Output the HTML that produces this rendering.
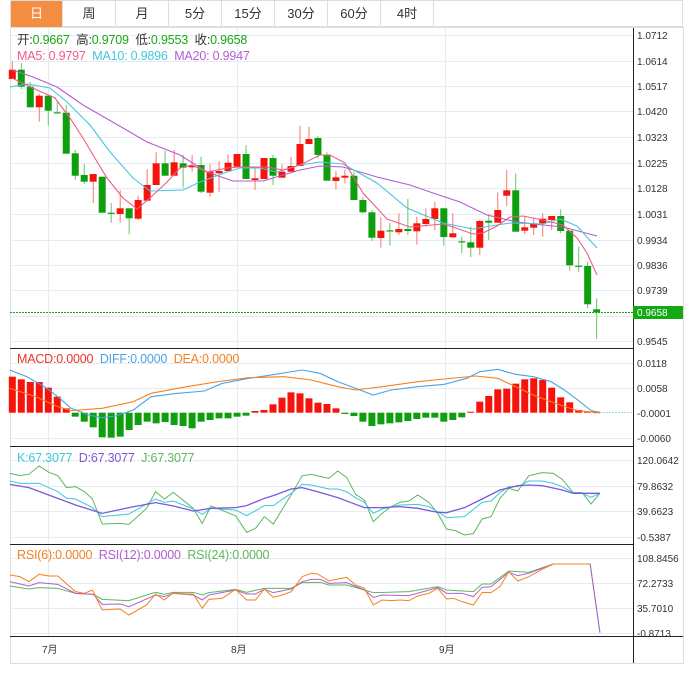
<!DOCTYPE html>
<html><head><meta charset="utf-8">
<style>
body{margin:0;background:#fff;width:693px;height:673px;overflow:hidden;font-family:"Liberation Sans","Noto Sans CJK SC",sans-serif;}
.tabs{position:absolute;left:10px;top:0;height:27px;width:673px;border:1px solid #ddd;border-bottom:1px solid #ddd;box-sizing:border-box;display:flex;}
.tab{width:53px;height:26px;line-height:26px;text-align:center;font-size:13px;color:#333;border-right:1px solid #ddd;box-sizing:border-box;}
.tab.on{background:#f48c42;color:#fff;width:52px;}
svg{position:absolute;left:0;top:0}
.lg{position:absolute;font-size:12.5px;line-height:16px;white-space:nowrap;letter-spacing:-0.2px}
</style></head><body>
<div class="tabs"><div class="tab on">日</div><div class="tab">周</div><div class="tab">月</div><div class="tab">5分</div><div class="tab">15分</div><div class="tab">30分</div><div class="tab">60分</div><div class="tab">4时</div></div>
<svg id="s" width="693" height="673" font-family="Liberation Sans, sans-serif">
<rect x="10.5" y="27.5" width="673" height="636" fill="none" stroke="#ddd"/>
<g stroke="#e6edf2" stroke-width="1">
<line x1="10" x2="633" y1="35.5" y2="35.5"/><line x1="10" x2="633" y1="61.5" y2="61.5"/><line x1="10" x2="633" y1="86.5" y2="86.5"/><line x1="10" x2="633" y1="111.5" y2="111.5"/><line x1="10" x2="633" y1="137.5" y2="137.5"/><line x1="10" x2="633" y1="163.5" y2="163.5"/><line x1="10" x2="633" y1="188.5" y2="188.5"/><line x1="10" x2="633" y1="214.5" y2="214.5"/><line x1="10" x2="633" y1="240.5" y2="240.5"/><line x1="10" x2="633" y1="265.5" y2="265.5"/><line x1="10" x2="633" y1="290.5" y2="290.5"/><line x1="10" x2="633" y1="316.5" y2="316.5"/><line x1="10" x2="633" y1="341.5" y2="341.5"/>
<line x1="10" x2="633" y1="363.5" y2="363.5"/><line x1="10" x2="633" y1="388.5" y2="388.5"/><line x1="10" x2="633" y1="438.5" y2="438.5"/>
<line x1="10" x2="633" y1="460.5" y2="460.5"/><line x1="10" x2="633" y1="486.5" y2="486.5"/><line x1="10" x2="633" y1="511.5" y2="511.5"/><line x1="10" x2="633" y1="537.5" y2="537.5"/>
<line x1="10" x2="633" y1="558.5" y2="558.5"/><line x1="10" x2="633" y1="583.5" y2="583.5"/><line x1="10" x2="633" y1="608.5" y2="608.5"/><line x1="10" x2="633" y1="633.5" y2="633.5"/>
<line x1="48.5" x2="48.5" y1="28" y2="636"/><line x1="237.5" x2="237.5" y1="28" y2="636"/><line x1="445.5" x2="445.5" y1="28" y2="636"/>
</g>
<g stroke="#222" stroke-width="1">
<line x1="633.5" x2="633.5" y1="28" y2="663"/>
<line x1="10" x2="633" y1="348.5" y2="348.5"/><line x1="10" x2="633" y1="446.5" y2="446.5"/><line x1="10" x2="633" y1="544.5" y2="544.5"/><line x1="10" x2="683" y1="636.5" y2="636.5"/>
</g>
<g id="candles"></g>
<g fill="none" stroke-width="1.1">
<polyline stroke="#b25ed0" points="12,70 33,77 57,87 83,105 123,128 147,142 180,155 207,172 233,181 263,181 300,170 320,166 343,167 377,177 410,185 433,193 460,202 487,215 517,222 543,225 563,227 597,236"/>
<polyline stroke="#44c6de" points="10,87 27,84 50,88 67,102 90,125 110,152 133,178 150,191 183,190 200,182 227,172 240,168 260,168 277,172 300,165 320,162 343,164 377,183 407,208 443,223 473,229 497,225 510,223 543,224 560,219 577,226 597,248"/>
<polyline stroke="#ef5b86" points="12,78 20,82 37,90 55,98 70,118 83,138 93,155 107,178 123,198 137,209 150,198 167,182 180,168 192,165 207,172 227,168 240,167 267,167 283,170 300,165 320,155 330,155 345,163 363,193 387,219 410,227 443,224 453,227 473,234 483,233 497,226 510,217 523,216 543,220 563,225 577,238 587,253 597,275"/>
</g>
<line x1="10" x2="633" y1="312.5" y2="312.5" stroke="#14a814" stroke-dasharray="2,1"/>
<rect x="633" y="306" width="50" height="13" fill="#14a814"/>
<text x="637" y="316" font-size="10" fill="#fff">0.9658</text>
<g id="macd"></g>
<line x1="600" x2="633" y1="412.5" y2="412.5" stroke="#9ed8ee" stroke-dasharray="2,1"/>
<g transform="translate(0,340) scale(0.4444,0.3333)" fill="none" stroke-width="1.1">
<polyline vector-effect="non-scaling-stroke" stroke="#4aa3e8" points="22,90 60,110 100,140 130,170 160,205 200,225 230,233 260,228 300,210 340,170 400,160 460,153 500,130 560,115 600,107 680,90 720,100 760,125 800,145 840,165 880,150 940,140 1000,133 1050,115 1080,95 1120,88 1160,103 1200,110 1240,125 1270,150 1300,180 1330,212 1350,217"/>
<polyline vector-effect="non-scaling-stroke" stroke="#f5811f" points="22,145 80,170 130,200 160,212 230,205 300,185 340,160 420,140 500,123 560,113 640,110 700,120 760,140 800,150 860,140 940,125 1000,117 1070,108 1120,115 1160,140 1200,165 1260,195 1300,212 1350,218"/>
</g>
<g transform="translate(0,445) scale(0.4444,0.3333)" fill="none">
<polyline vector-effect="non-scaling-stroke" stroke="#5cb85c" points="22,85 45,92 65,88 88,63 110,82 130,92 150,128 170,125 190,140 208,162 230,237 270,235 290,238 330,190 350,140 370,162 390,142 435,190 455,235 475,183 530,212 555,262 575,250 595,215 615,237 655,150 680,92 700,88 740,100 760,78 780,97 800,148 820,165 840,230 860,205 880,185 900,172 920,168 940,150 965,172 985,205 1005,252 1025,257 1045,270 1065,266 1085,222 1105,215 1125,160 1145,130 1165,138 1190,92 1220,83 1245,85 1265,103 1290,143 1310,143 1330,177 1350,145"/>
<polyline vector-effect="non-scaling-stroke" stroke="#3cc8dc" points="22,108 45,115 88,115 130,140 150,160 170,162 208,188 230,215 290,207 350,162 370,172 390,168 435,192 455,208 475,190 530,195 555,212 595,182 615,182 655,145 680,118 700,120 740,132 760,132 780,140 800,158 820,172 840,205 860,192 900,180 940,178 965,185 985,200 1005,218 1045,215 1085,172 1105,168 1125,143 1145,125 1165,125 1190,108 1220,108 1245,115 1265,125 1290,143 1310,145 1330,157 1350,145"/>
<polyline vector-effect="non-scaling-stroke" stroke="#7e57d8" stroke-width="1.3" points="22,118 65,128 130,160 170,180 230,205 290,188 350,173 390,183 435,198 475,190 530,188 555,182 595,160 615,152 655,132 680,128 720,142 760,158 800,178 820,188 860,188 900,185 940,190 985,202 1005,203 1045,188 1085,162 1125,135 1165,122 1190,120 1220,122 1265,135 1290,145 1350,145"/>
</g>
<g transform="translate(0,540) scale(0.4444,0.3333)" fill="none">
<polyline vector-effect="non-scaling-stroke" stroke="#5cb85c" points="22,138 65,147 88,143 130,145 170,160 210,163 230,178 290,182 350,157 370,163 390,157 435,157 455,165 470,158 530,148 555,157 595,145 655,145 680,128 720,127 740,135 780,135 820,150 840,158 920,155 985,140 1005,150 1065,155 1085,132 1105,132 1145,93 1190,97 1245,72 1328,72 1350,278"/>
<polyline vector-effect="non-scaling-stroke" stroke="#b25ed0" points="22,125 65,138 88,128 130,133 170,160 210,163 230,193 270,192 290,200 350,165 370,170 390,160 435,165 455,180 470,165 530,150 555,162 575,162 595,148 615,158 655,147 680,125 700,118 720,118 740,130 780,128 820,150 840,172 860,165 920,167 985,143 1005,160 1040,160 1065,170 1085,142 1105,140 1145,97 1165,107 1190,100 1245,72 1328,72 1350,278"/>
<polyline vector-effect="non-scaling-stroke" stroke="#f5811f" points="22,105 45,110 65,125 88,103 110,108 130,108 170,155 190,160 208,150 230,210 250,208 270,207 290,225 330,195 350,162 370,180 390,158 420,162 435,162 455,205 470,178 500,175 530,148 555,180 575,180 595,147 615,172 635,165 655,155 680,110 700,100 715,102 740,123 760,117 780,112 800,135 820,145 840,195 860,180 880,182 900,180 920,182 940,168 965,160 985,145 1005,177 1020,175 1040,185 1065,195 1085,157 1105,158 1125,140 1145,95 1165,123 1190,110 1220,88 1245,72 1328,72"/>
</g>
<g font-size="10" fill="#333">
<text x="637" y="39">1.0712</text><text x="637" y="65">1.0614</text><text x="637" y="90">1.0517</text><text x="637" y="115">1.0420</text><text x="637" y="141">1.0323</text><text x="637" y="167">1.0225</text><text x="637" y="192">1.0128</text><text x="637" y="218">1.0031</text><text x="637" y="244">0.9934</text><text x="637" y="269">0.9836</text><text x="637" y="294">0.9739</text><text x="637" y="345">0.9545</text>
<text x="637" y="367">0.0118</text><text x="637" y="392">0.0058</text><text x="637" y="417">-0.0001</text><text x="637" y="442">-0.0060</text>
<text x="637" y="464">120.0642</text><text x="637" y="490">79.8632</text><text x="637" y="515">39.6623</text><text x="637" y="541">-0.5387</text>
<text x="637" y="562">108.8456</text><text x="637" y="587">72.2733</text><text x="637" y="612">35.7010</text><text x="637" y="637">-0.8713</text>
<text x="42" y="653" font-family="Liberation Sans, Noto Sans CJK SC, sans-serif">7月</text><text x="231" y="653" font-family="Liberation Sans, Noto Sans CJK SC, sans-serif">8月</text><text x="439" y="653" font-family="Liberation Sans, Noto Sans CJK SC, sans-serif">9月</text>
</g>
</svg>
<div class="lg" style="left:17px;top:32px;color:#333">开:<span style="color:#14a814">0.9667</span>&nbsp; 高:<span style="color:#14a814">0.9709</span>&nbsp; 低:<span style="color:#14a814">0.9553</span>&nbsp; 收:<span style="color:#14a814">0.9658</span></div>
<div class="lg" style="left:17px;top:48px"><span style="color:#ef5b86">MA5: 0.9797</span>&nbsp; <span style="color:#44c6de">MA10: 0.9896</span>&nbsp; <span style="color:#b25ed0">MA20: 0.9947</span></div>
<div class="lg" style="left:17px;top:351px"><span style="color:#ee3322">MACD:0.0000</span>&nbsp; <span style="color:#4aa3e8">DIFF:0.0000</span>&nbsp; <span style="color:#f5811f">DEA:0.0000</span></div>
<div class="lg" style="left:17px;top:450px"><span style="color:#3cc8dc">K:67.3077</span>&nbsp; <span style="color:#7e57d8">D:67.3077</span>&nbsp; <span style="color:#5cb85c">J:67.3077</span></div>
<div class="lg" style="left:17px;top:547px"><span style="color:#f5811f">RSI(6):0.0000</span>&nbsp; <span style="color:#b25ed0">RSI(12):0.0000</span>&nbsp; <span style="color:#5cb85c">RSI(24):0.0000</span></div>
<script>
var C=[['r',69.7,79,61,79],['g',69.7,86.7,63,89.3],['g',86.7,107.3,82,107.3],['r',95.7,107.3,94,121.7],['g',95.7,110.7,95.7,125.7],['g',112.3,112.3,101.7,112.3],['g',112.7,153.7,105,153.7],['g',153.3,175.7,150,180],['g',175,181.7,164,184],['r',174,181.7,174,203.3],['g',176.7,212.7,176.7,212.7],['g',212.7,212.7,203,222.7],['r',208.3,214,190,222.7],['g',208.3,218.3,208.3,234.3],['r',200,218.7,195.7,220],['r',185,200.7,169.3,200.7],['r',163.3,185,152.3,185],['g',163.3,175.7,150.7,175.7],['r',162.3,175.7,150,175.7],['g',163.3,167.7,155,187.7],['r',165.7,167.3,155,171.7],['g',165,191.7,156.7,193.3],['r',171.7,192.7,164.3,196.7],['r',171,173.3,161,191.7],['r',162.7,171,154.3,171],['r',154,166.7,154,166.7],['g',154,179,145,179],['r',178.3,180,168.3,190],['r',158,179,158,179],['g',158,175.7,155,185],['r',171.7,177.7,164.3,177.7],['r',166,171.7,156.7,171.7],['r',144,166,125.7,166],['r',139,144,126.7,144],['g',138,155,136,158.3],['g',155,180.7,152.3,180.7],['r',177.3,181,171,189.3],['r',175.7,177.7,169.3,183.3],['g',175.7,200,171.7,200],['g',200,212.3,197.3,213.3],['g',212.3,237.7,210,241],['r',230.7,238,217.3,247.7],['g',230.3,231.3,222.7,245.3],['r',229,232.3,213.3,235],['g',229,231,199,235],['r',223.3,231.3,216.7,244.7],['r',219,224,208.3,226.7],['r',208.3,219,201.7,230],['g',208.3,237,208.3,245.7],['r',233.3,237.3,213.3,237.3],['g',241.3,241.3,236.7,253.3],['g',242.3,247.7,226.7,257.3],['r',221,247.7,220,255],['g',220.7,222.7,214.3,240],['r',210,222.7,192.3,222.7],['r',190.3,195.7,170,206],['g',190.3,231.7,173.3,231.7],['r',227.3,230.7,216.7,234],['r',223.3,227.7,217.7,235],['r',218.7,223.3,213.3,236.7],['r',216,220,216,230],['g',216,231,209.3,233.3],['g',230.7,265.3,230.7,270.7],['g',265.7,265.7,246.7,272.3],['g',266,304.3,261.7,308.3],['g',309.3,312.3,298.3,339]];
var s='';
C.forEach(function(c,i){var x=12.3+i*8.99;var col=c[0]=='r'?'#f5130c':'#0e9e0e';var wc=c[0]=='r'?'#f7766f':'#69c569';
s+='<line x1="'+x+'" x2="'+x+'" y1="'+c[3]+'" y2="'+c[4]+'" stroke="'+wc+'"/>';
var h=Math.max(c[2]-c[1],1.2);s+='<rect x="'+(x-3.5)+'" y="'+c[1]+'" width="7" height="'+h+'" fill="'+col+'"/>';});
document.getElementById('candles').innerHTML=s;
var M=[110,118,126,126,143,170,205,230,245,262,292,293,290,270,255,245,250,246,255,258,265,245,240,235,235,230,227,213,210,193,173,157,160,175,188,192,205,222,228,245,258,253,250,247,243,237,233,233,245,240,232,215,185,168,148,146,131,118,115,120,143,172,187,210,215,217];
var t='';var z=412.7;
M.forEach(function(v,i){var x=12.3+i*8.99;var y=340+v/3;var col=y<z?'#f5130c':'#0e9e0e';var a=Math.min(y,z),b=Math.max(y,z);t+='<rect x="'+(x-3.5)+'" y="'+a+'" width="7" height="'+Math.max(b-a,0.8)+'" fill="'+col+'"/>';});
document.getElementById('macd').innerHTML=t;
</script>
</body></html>
